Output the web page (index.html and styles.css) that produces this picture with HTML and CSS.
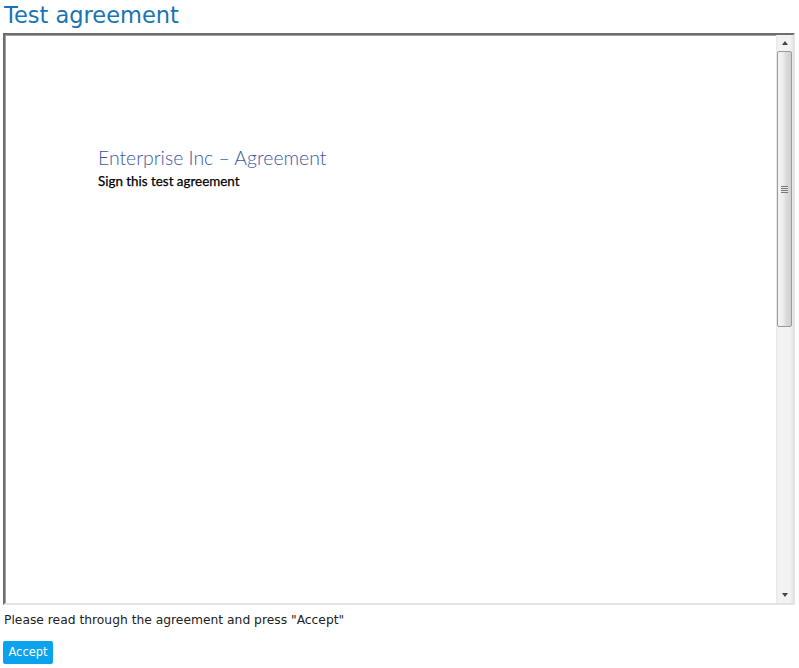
FILE: index.html
```html
<!DOCTYPE html>
<html>
<head>
<meta charset="utf-8">
<title>Test agreement</title>
<link rel="stylesheet" href="styles.css">
</head>
<body>
<h1 class="title">Test agreement</h1>
<div class="frame">
  <div class="doc">
    <div class="doc-page">
      <h2 class="doc-heading">Enterprise Inc – Agreement</h2>
      <p class="doc-text">Sign this test agreement</p>
    </div>
  </div>
  <div class="scrollbar">
    <div class="sb-btn"><span class="arrow-up"></span></div>
    <div class="sb-track">
      <div class="sb-thumb"><span class="grip"></span></div>
    </div>
    <div class="sb-btn"><span class="arrow-down"></span></div>
  </div>
</div>
<p class="note">Please read through the agreement and press "Accept"</p>
<button class="accept">Accept</button>
</body>
</html>
```

FILE: styles.css
```css
html, body {
  margin: 0;
  padding: 0;
  background: #fff;
}
body {
  padding: 0 4px 0 3px;
  font-family: "DejaVu Sans", Verdana, sans-serif;
}
.title {
  margin: 0;
  padding: 2px 0 0 1px;
  height: 31px;
  font-weight: normal;
  font-size: 22.5px;
  line-height: 26px;
  color: #1874b4;
}
.frame {
  display: flex;
  height: 568px;
  border-style: solid;
  border-width: 2px;
  border-color: #6e6e6e #e3e3e3 #e3e3e3 #6e6e6e;
  box-shadow: inset 1px 1px 0 #a0a0a0;
  background: #fff;
}
.doc {
  flex: 1;
  padding: 111px 0 0 93px;
}
.doc-heading {
  margin: 0;
  font-family: Lato, "Open Sans", sans-serif;
  font-weight: 300;
  font-size: 19.4px;
  line-height: 24px;
  color: #3c58a0;
}
.doc-text {
  margin: 3px 0 0;
  font-family: Lato, "Open Sans", sans-serif;
  font-weight: 400;
  font-size: 13.4px;
  line-height: 17px;
  color: #000;
  -webkit-text-stroke: 0.25px #000;
}
.scrollbar {
  width: 17px;
  display: flex;
  flex-direction: column;
  background: #eaeaea;
  background-image: linear-gradient(to right, #e6e6e6 0, #f2f2f2 2px, #f2f2f2 14px, #e6e6e6 17px);
}
.sb-btn {
  height: 16px;
  display: flex;
  align-items: center;
  justify-content: center;
}
.arrow-up {
  width: 0; height: 0;
  border-left: 3.5px solid transparent;
  border-right: 3.5px solid transparent;
  border-bottom: 4px solid #444;
}
.arrow-down {
  width: 0; height: 0;
  border-left: 3.5px solid transparent;
  border-right: 3.5px solid transparent;
  border-top: 4px solid #444;
}
.sb-track {
  flex: 1;
  padding: 0 1px;
}
.sb-thumb {
  height: 276px;
  border: 1px solid #9a9a9a;
  border-radius: 2px;
  background: linear-gradient(to right, #f4f4f4 0, #ececec 40%, #dcdcdc 60%, #d0d0d0 100%);
  display: flex;
  align-items: center;
  justify-content: center;
  box-sizing: border-box;
}
.grip {
  width: 7px;
  height: 7px;
  background: repeating-linear-gradient(to bottom, #777 0, #777 1px, #e8e8e8 1px, #e8e8e8 2px);
}
.note {
  margin: 7px 0 0 1px;
  font-size: 12.3px;
  line-height: 16px;
  color: #222;
}
.accept {
  margin-top: 13px;
  width: 50px;
  height: 23px;
  padding: 0;
  border: none;
  border-radius: 2px;
  background: #0ba2ee;
  color: #fff;
  font-family: "DejaVu Sans", Verdana, sans-serif;
  font-size: 11.5px;
  line-height: 23px;
}
```
